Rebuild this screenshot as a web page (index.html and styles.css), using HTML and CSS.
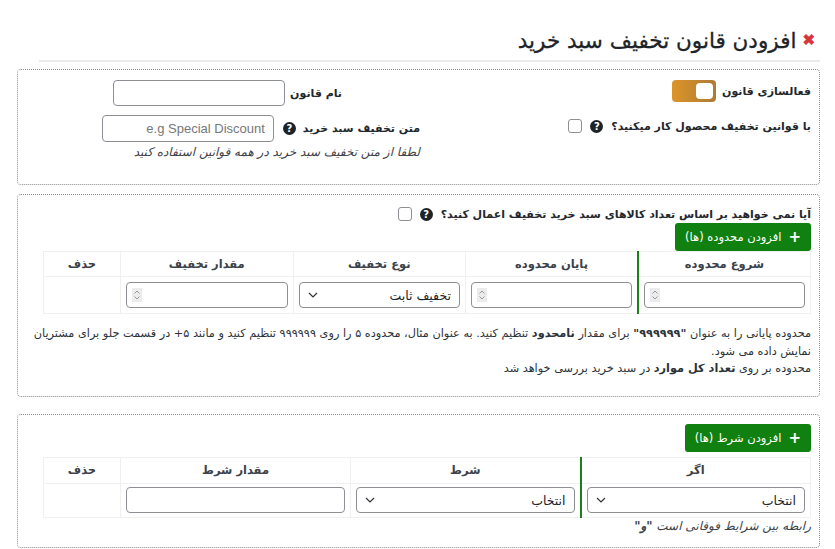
FILE: index.html
```html
<!DOCTYPE html>
<html lang="fa" dir="rtl">

<head>
    <meta charset="UTF-8">
    <title>افزودن قانون تخفیف سبد خرید</title>
    <link rel="stylesheet" href="styles.css">
</head>

<body>
    <div class="page">
        <h1 class="title"><span class="close">&#x2716;</span>افزودن قانون تخفیف سبد خرید</h1>
        <div class="title-line"></div>

        <!-- general settings -->
        <div class="box box-main">
            <div class="col-right">
                <div class="row row-toggle">
                    <label class="lbl">فعالسازی قانون</label>
                    <span class="toggle"><span class="knob"></span></span>
                </div>
                <div class="row row-check">
                    <label class="lbl">با قوانین تخفیف محصول کار میکنید؟</label>
                    <span class="help">?</span>
                    <input class="check" type="checkbox">
                </div>
            </div>
            <div class="col-left">
                <div class="row row-name">
                    <label class="lbl">نام قانون</label>
                    <input class="field field-name" type="text">
                </div>
                <div class="row row-msg">
                    <label class="lbl">متن تخفیف سبد خرید</label>
                    <span class="help">?</span>
                    <input class="field field-msg" type="text" placeholder="e.g Special Discount">
                </div>
                <div class="hint">لطفا از متن تخفیف سبد خرید در همه قوانین استفاده کنید</div>
            </div>
        </div>

        <!-- ranges -->
        <div class="box box-range">
            <div class="row row-question">
                <label class="lbl">آیا نمی خواهید بر اساس تعداد کالاهای سبد خرید تخفیف اعمال کنید؟</label>
                <span class="help">?</span>
                <input class="check" type="checkbox">
            </div>
            <div class="btn-row">
                <button class="btn-add"><span class="plus">+</span>افزودن محدوده (ها)</button>
            </div>
            <table class="grid grid-range">
                <colgroup>
                    <col class="c-range">
                    <col class="c-range">
                    <col class="c-range">
                    <col class="c-range">
                    <col class="c-del">
                </colgroup>
                <thead>
                    <tr>
                        <th class="first">شروع محدوده</th>
                        <th>پایان محدوده</th>
                        <th>نوع تخفیف</th>
                        <th>مقدار تخفیف</th>
                        <th>حذف</th>
                    </tr>
                </thead>
                <tbody>
                    <tr>
                        <td class="first">
                            <div class="num"><span class="spin"><svg width="8" height="12" viewBox="0 0 8 12"><path d="M1.5 4.5 4 2 6.5 4.5M1.5 7.5 4 10 6.5 7.5" fill="none" stroke="#9a9a9a" stroke-width="1"/></svg></span></div>
                        </td>
                        <td>
                            <div class="num"><span class="spin"><svg width="8" height="12" viewBox="0 0 8 12"><path d="M1.5 4.5 4 2 6.5 4.5M1.5 7.5 4 10 6.5 7.5" fill="none" stroke="#9a9a9a" stroke-width="1"/></svg></span></div>
                        </td>
                        <td>
                            <div class="select"><span>تخفیف ثابت</span><svg width="10" height="6" viewBox="0 0 10 6"><path d="M1 1 5 5 9 1" fill="none" stroke="#333" stroke-width="1.2"/></svg></div>
                        </td>
                        <td>
                            <div class="num"><span class="spin"><svg width="8" height="12" viewBox="0 0 8 12"><path d="M1.5 4.5 4 2 6.5 4.5M1.5 7.5 4 10 6.5 7.5" fill="none" stroke="#9a9a9a" stroke-width="1"/></svg></span></div>
                        </td>
                        <td></td>
                    </tr>
                </tbody>
            </table>
            <p class="notes">
                محدوده پایانی را به عنوان <b>"۹۹۹۹۹۹"</b> برای مقدار <b>نامحدود</b> تنظیم کنید. به عنوان مثال، محدوده ۵ را روی ۹۹۹۹۹۹ تنظیم کنید و مانند ۵+ در قسمت جلو برای مشتریان نمایش داده می شود.<br>
                محدوده بر روی <b>تعداد کل موارد</b> در سبد خرید بررسی خواهد شد
            </p>
        </div>

        <!-- conditions -->
        <div class="box box-cond">
            <div class="btn-row">
                <button class="btn-add"><span class="plus">+</span>افزودن شرط (ها)</button>
            </div>
            <table class="grid grid-cond">
                <colgroup>
                    <col class="c-cond">
                    <col class="c-cond">
                    <col class="c-cond">
                    <col class="c-del">
                </colgroup>
                <thead>
                    <tr>
                        <th class="first">اگر</th>
                        <th>شرط</th>
                        <th>مقدار شرط</th>
                        <th>حذف</th>
                    </tr>
                </thead>
                <tbody>
                    <tr>
                        <td class="first">
                            <div class="select"><span>انتخاب</span><svg width="10" height="6" viewBox="0 0 10 6"><path d="M1 1 5 5 9 1" fill="none" stroke="#333" stroke-width="1.2"/></svg></div>
                        </td>
                        <td>
                            <div class="select"><span>انتخاب</span><svg width="10" height="6" viewBox="0 0 10 6"><path d="M1 1 5 5 9 1" fill="none" stroke="#333" stroke-width="1.2"/></svg></div>
                        </td>
                        <td>
                            <input class="field field-cell" type="text">
                        </td>
                        <td></td>
                    </tr>
                </tbody>
            </table>
            <div class="hint hint-cond">رابطه بین شرایط فوقانی است <b>"و"</b></div>
        </div>
    </div>
</body>

</html>
```

FILE: styles.css
```css
* {
    margin: 0;
    padding: 0;
    box-sizing: border-box;
}

body {
    background: #fff;
    color: #1d2327;
    font-family: "DejaVu Sans", "Noto Sans", sans-serif;
    font-size: 12px;
}

.page {
    padding: 24px 15px 0 17px;
}

.title {
    display: flex;
    align-items: center;
    height: 32px;
    padding-right: 5px;
    font-size: 21.5px;
    font-weight: normal;
    color: #1d2327;
    -webkit-text-stroke: 0.3px #1d2327;
}

.close {
    color: #d63638;
    font-size: 15px;
    margin-left: 6px;
    -webkit-text-stroke: 0.6px #d63638;
}

.title-line {
    height: 2px;
    background: #ebebeb;
    margin: 4px 0 7px 22px;
}

.box {
    border: 1px dotted #8c8c8c;
    border-radius: 4px;
    padding: 0 8px;
}

.row {
    display: flex;
    align-items: center;
}

.lbl {
    font-weight: bold;
    font-size: 11px;
    color: #23282d;
}

.help {
    display: inline-flex;
    align-items: center;
    justify-content: center;
    width: 13px;
    height: 13px;
    border-radius: 50%;
    background: #1d2327;
    color: #fff;
    font-size: 10px;
    font-weight: bold;
    margin-right: 8px;
}

.check {
    width: 14px;
    height: 14px;
    margin-right: 8px;
    appearance: none;
    border: 1px solid #8c8f94;
    border-radius: 3px;
    background: #fff;
}

.field {
    height: 26px;
    border: 1px solid #8c8f94;
    border-radius: 4px;
    background: #fff;
    padding: 0 8px;
    font-family: "Liberation Sans", sans-serif;
    font-size: 13px;
}

.field::placeholder {
    color: #777;
}

/* first box */
.box-main {
    display: flex;
    height: 116px;
    padding-top: 10px;
}

.col-right {
    flex: 0 0 391px;
}

.row-toggle {
    height: 22px;
}

.row-toggle .lbl {
    margin-left: 6px;
}

.toggle {
    display: flex;
    justify-content: flex-start;
    align-items: center;
    width: 44px;
    height: 22px;
    padding: 3px;
    border-radius: 4px;
    background: linear-gradient(to left, #ad7b37, #dc9428);
}

.knob {
    width: 17px;
    height: 16px;
    border-radius: 4px;
    background: #fff;
}

.row-check {
    height: 14px;
    margin-top: 17px;
}

.row-name {
    height: 26px;
    padding-right: 78px;
}

.row-name .lbl {
    margin-left: 5px;
}

.field-name {
    width: 172px;
}

.row-msg {
    height: 27px;
    margin-top: 9px;
}

.row-msg .help {
    margin: 0 7px 0 0;
}

.field-msg {
    width: 172px;
    height: 27px;
    margin-right: 9px;
}

.hint {
    font-style: italic;
    font-size: 12px;
    color: #3c434a;
    line-height: 16px;
    margin-top: 2px;
}

/* ranges */
.box-range {
    margin-top: 9px;
    padding-top: 10px;
    padding-bottom: 18px;
}

.row-question {
    height: 18px;
}

.btn-row {
    display: flex;
}

.btn-add {
    display: flex;
    align-items: center;
    height: 28px;
    padding: 0 10px;
    border: none;
    border-radius: 3px;
    background: #108010;
    color: #fff;
    font-family: "DejaVu Sans", sans-serif;
    font-size: 11.5px;
}

.plus {
    font-weight: bold;
    font-size: 15px;
    margin-left: 7px;
}

.grid {
    width: 767px;
    border-collapse: collapse;
    table-layout: fixed;
}

.c-range {
    width: 172.5px;
}

.c-cond {
    width: 230px;
}

.c-del {
    width: 77px;
}

.grid th,
.grid td {
    border: 1px solid #f0f0f0;
    padding: 0 5px;
    text-align: center;
}

.grid th {
    height: 25px;
    font-size: 11.5px;
    font-weight: bold;
    color: #3c434a;
}

.grid td {
    height: 37px;
}

.grid .first {
    border-left: 2px solid #1a801a;
}

.num {
    position: relative;
    height: 26px;
    border: 1px solid #8c8f94;
    border-radius: 4px;
    background: #fff;
}

.spin {
    position: absolute;
    left: 5px;
    top: 5px;
    display: flex;
    align-items: center;
    justify-content: center;
    width: 10px;
    height: 14px;
    background: #ececec;
}

.select {
    display: flex;
    align-items: center;
    justify-content: space-between;
    height: 26px;
    padding: 0 8px;
    border: 1px solid #8c8f94;
    border-radius: 4px;
    background: #fff;
    font-size: 12.5px;
    color: #1d2327;
}

.notes {
    margin-top: 11px;
    font-size: 11.3px;
    line-height: 17.5px;
    color: #2c3338;
}

/* conditions */
.box-cond {
    margin-top: 17px;
    padding-top: 9px;
    padding-bottom: 13px;
}

.grid-cond {
    margin-top: 5px;
}

.grid-cond th {
    height: 26px;
}

.grid-cond td {
    height: 34px;
}

.field-cell {
    width: 100%;
}

.hint-cond {
    margin-top: 1px;
    line-height: 15px;
}
```
